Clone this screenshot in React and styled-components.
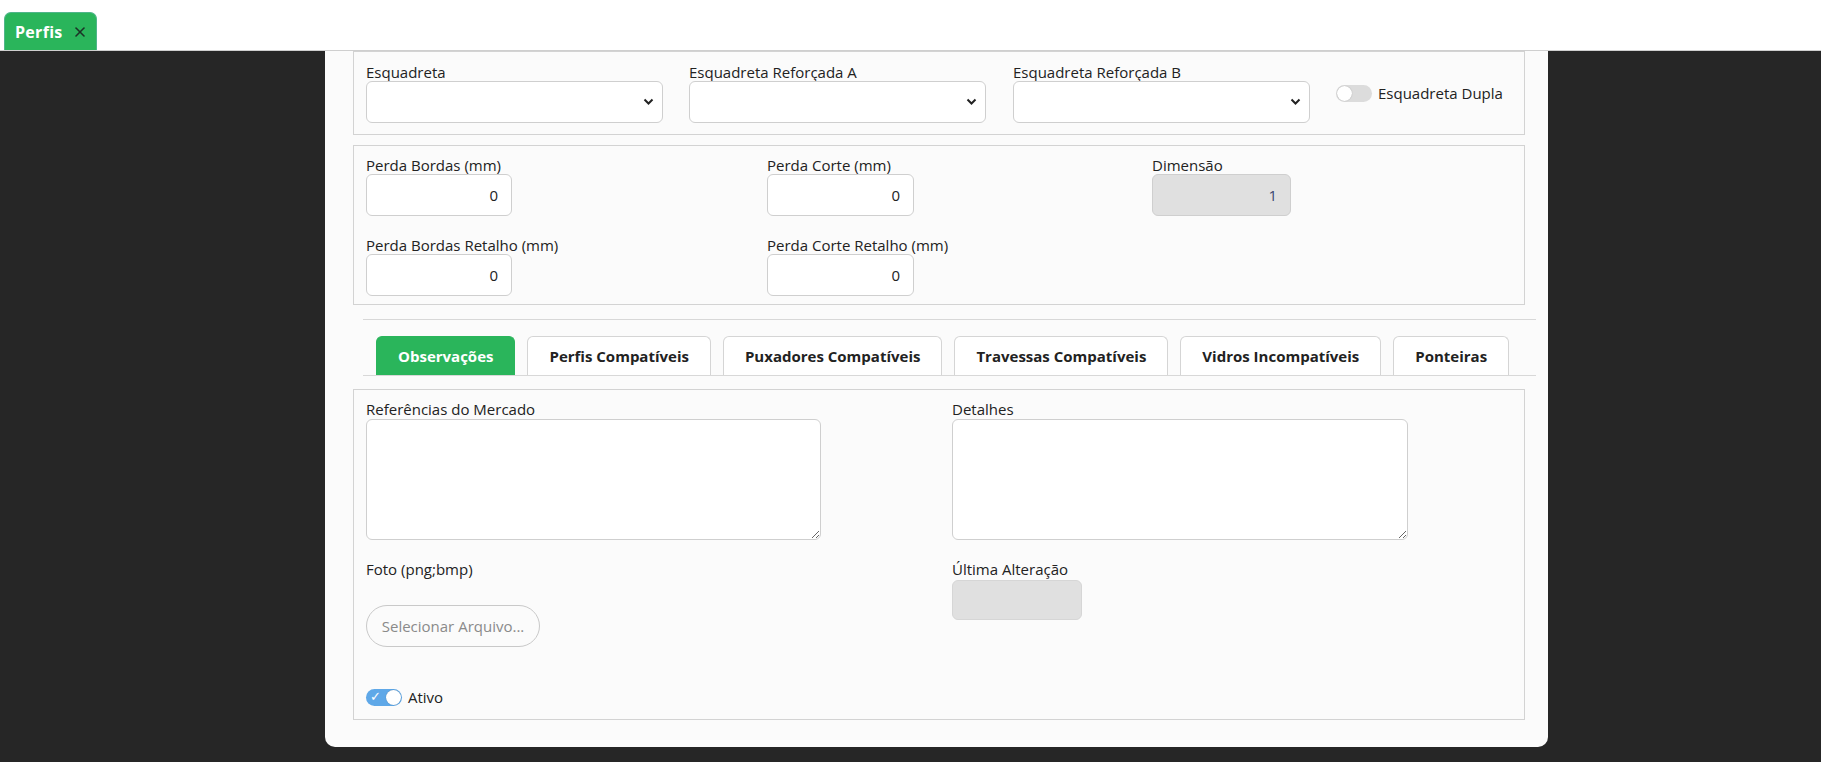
import React from "react";
import styled, { createGlobalStyle } from "styled-components";
import { X } from "lucide-react";

const GlobalStyle = createGlobalStyle`
  html, body {
    margin: 0;
    padding: 0;
    background: #262626;
  }
  body {
    font-family: "Open Sans", "Liberation Sans", sans-serif;
    color: #222;
    overflow: hidden;
  }
  * { box-sizing: border-box; }
`;

const TopBar = styled.div`
  height: 51px;
  background: #fff;
  border-bottom: 1px solid #cfcfcf;
  display: flex;
  align-items: flex-end;
  padding-left: 4px;
`;

const PageTab = styled.div`
  height: 38px;
  width: 93px;
  background: #2ab55b;
  border: 1px solid #4fb58a;
  border-bottom: none;
  border-radius: 7px 7px 0 0;
  display: flex;
  align-items: center;
  padding-left: 10px;
  gap: 9px;
  color: #fff;
  font-weight: 700;
  font-size: 16px;
  letter-spacing: 0.3px;
  svg { color: #1c3326; }
`;

const Main = styled.div`
  height: 711px;
  background: #262626;
  padding-left: 325px;
`;

const Panel = styled.div`
  width: 1223px;
  height: 696px;
  background: #fbfbfb;
  border-radius: 0 0 10px 10px;
  padding: 0 23px 0 28px;
`;

const Fieldset = styled.div`
  border: 1px solid #d3d3d3;
  background: #fbfbfb;
  margin-top: ${p => p.$mt || 0}px;
  padding: ${p => p.$pad};
  display: grid;
  grid-template-columns: ${p => p.$cols};
  row-gap: ${p => p.$rowGap || 0}px;
  align-items: start;
`;

const Field = styled.div`
  display: flex;
  flex-direction: column;
`;

const Label = styled.label`
  display: block;
  font-size: 15px;
  line-height: 17px;
  color: #222;
  white-space: nowrap;
`;

const SelectWrap = styled.div`
  position: relative;
  width: 297px;
  height: 42px;
`;

const Select = styled.select`
  appearance: none;
  width: 100%;
  height: 100%;
  background: #fff;
  border: 1px solid #cfcfcf;
  border-radius: 6px;
  font-family: inherit;
  font-size: 15px;
`;

const Chevron = styled.svg`
  position: absolute;
  right: 9px;
  top: 17px;
  pointer-events: none;
`;

const NumberInput = styled.input`
  width: ${p => p.$w}px;
  height: 42px;
  border: 1px solid #cfcfcf;
  border-radius: 6px;
  background: ${p => (p.disabled ? "#e0e0e0" : "#fff")};
  color: ${p => (p.disabled ? "#3b4670" : "#222")};
  text-align: right;
  padding: 0 13px;
  font-family: inherit;
  font-size: 15px;
  outline: none;
`;

const SwitchRow = styled.div`
  display: flex;
  align-items: center;
  gap: 6px;
  margin-top: ${p => p.$mt || 0}px;
  font-size: 15px;
`;

const Switch = styled.div`
  position: relative;
  width: 36px;
  height: 17px;
  border-radius: 9px;
  background: ${p => (p.$on ? "#5fa8e8" : "#dcdcdc")};
  flex-shrink: 0;
`;

const Knob = styled.span`
  position: absolute;
  top: 1px;
  ${p => (p.$on ? "right: 1px;" : "left: 1px;")}
  width: 15px;
  height: 15px;
  border-radius: 50%;
  background: #fff;
  box-shadow: 0 0 1px rgba(0, 0, 0, 0.35);
`;

const Check = styled.span`
  position: absolute;
  left: 4px;
  top: -1px;
  color: #fff;
  font-size: 13px;
  line-height: 18px;
  font-family: "DejaVu Sans", sans-serif;
`;

const Separator = styled.div`
  margin: 14px -11px 0 10px;
  border-top: 1px solid #d8d8d8;
`;

const TabStrip = styled.div`
  margin: 16px -11px 0 10px;
  padding-left: 13px;
  display: flex;
  gap: 12px;
  border-bottom: 1px solid #d8d8d8;
`;

const Tab = styled.div`
  height: 39px;
  padding: 0 21px;
  display: flex;
  align-items: center;
  font-size: 15px;
  font-weight: 700;
  white-space: nowrap;
  border: 1px solid ${p => (p.$active ? "#2ab55b" : "#d5d5d5")};
  border-bottom: none;
  border-radius: 6px 6px 0 0;
  background: ${p => (p.$active ? "#2ab55b" : "#fff")};
  color: ${p => (p.$active ? "#fff" : "#222")};
`;

const TextArea = styled.textarea`
  width: ${p => p.$w}px;
  height: 121px;
  margin-top: 1px;
  border: 1px solid #cfcfcf;
  border-radius: 6px;
  background: #fff;
  font-family: inherit;
  font-size: 15px;
`;

const FileButton = styled.button`
  margin-top: 27px;
  width: 174px;
  height: 42px;
  border: 1px solid #c9c9c9;
  border-radius: 21px;
  background: transparent;
  color: #8a8a8a;
  font-family: inherit;
  font-size: 15px;
  padding: 0;
  text-align: center;
`;

const GrayBox = styled.div`
  width: 130px;
  height: 40px;
  margin-top: 2px;
  border: 1px solid #d6d6d6;
  border-radius: 6px;
  background: #e0e0e0;
`;

const ChevronIcon = () => (
  <Chevron width="11" height="8" viewBox="0 0 11 8">
    <path d="M1.5 1.5 L5.5 5.5 L9.5 1.5" fill="none" stroke="#222" strokeWidth="2" />
  </Chevron>
);

const SelectField = ({ label }) => (
  <Field>
    <Label>{label}</Label>
    <SelectWrap>
      <Select defaultValue="">
        <option value=""></option>
      </Select>
      <ChevronIcon />
    </SelectWrap>
  </Field>
);

const NumField = ({ label, value, w, disabled }) => (
  <Field>
    <Label>{label}</Label>
    <NumberInput $w={w} defaultValue={value} disabled={disabled} readOnly />
  </Field>
);

const tabs = [
  "Observações",
  "Perfis Compatíveis",
  "Puxadores Compatíveis",
  "Travessas Compatíveis",
  "Vidros Incompatíveis",
  "Ponteiras",
];

export default function App() {
  return (
    <>
      <GlobalStyle />
      <TopBar>
        <PageTab>
          Perfis <X size={16} strokeWidth={2.4} />
        </PageTab>
      </TopBar>
      <Main>
        <Panel>
          <Fieldset $pad="12px 12px 11px" $cols="323px 324px 323px 1fr">
            <SelectField label="Esquadreta" />
            <SelectField label="Esquadreta Reforçada A" />
            <SelectField label="Esquadreta Reforçada B" />
            <SwitchRow $mt={19}>
              <Switch>
                <Knob />
              </Switch>
              Esquadreta Dupla
            </SwitchRow>
          </Fieldset>

          <Fieldset $mt={10} $pad="11px 12px 8px" $cols="401px 385px 1fr" $rowGap={21}>
            <NumField label="Perda Bordas (mm)" value="0" w={146} />
            <NumField label="Perda Corte (mm)" value="0" w={147} />
            <NumField label="Dimensão" value="1" w={139} disabled />
            <NumField label="Perda Bordas Retalho (mm)" value="0" w={146} />
            <NumField label="Perda Corte Retalho (mm)" value="0" w={147} />
          </Fieldset>

          <Separator />
          <TabStrip>
            {tabs.map((t, i) => (
              <Tab key={t} $active={i === 0}>
                {t}
              </Tab>
            ))}
          </TabStrip>

          <Fieldset $mt={13} $pad="11px 12px 12px" $cols="586px 1fr" $rowGap={21}>
            <Field>
              <Label>Referências do Mercado</Label>
              <TextArea $w={455} />
            </Field>
            <Field>
              <Label>Detalhes</Label>
              <TextArea $w={456} />
            </Field>
            <Field>
              <Label>Foto (png;bmp)</Label>
              <FileButton>Selecionar Arquivo...</FileButton>
              <SwitchRow $mt={40}>
                <Switch $on>
                  <Check>✓</Check>
                  <Knob $on />
                </Switch>
                Ativo
              </SwitchRow>
            </Field>
            <Field>
              <Label>Última Alteração</Label>
              <GrayBox />
            </Field>
          </Fieldset>
        </Panel>
      </Main>
    </>
  );
}
